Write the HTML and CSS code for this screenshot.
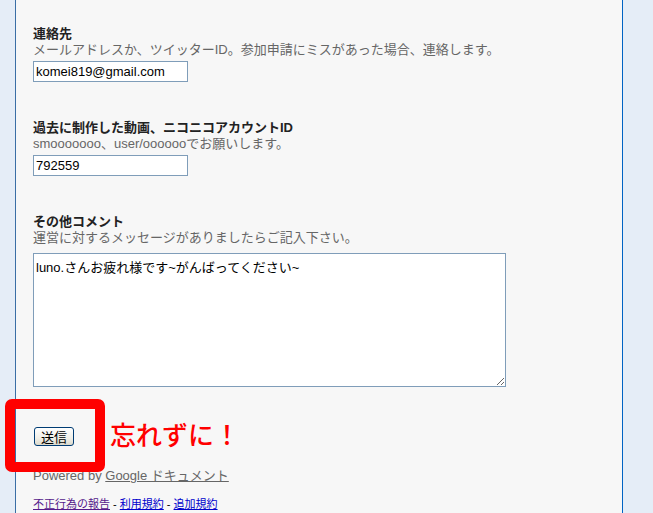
FILE: index.html
```html
<!DOCTYPE html>
<html>
<head>
  <meta charset="utf-8">
  <title>参加申請フォーム</title>
  <link rel="stylesheet" href="styles.css">
</head>
<body>
  <div class="page">
    <form class="form-panel">
      <div class="field">
        <label class="field-label" for="contact">連絡先</label>
        <div class="field-help">メールアドレスか、ツイッターID。参加申請にミスがあった場合、連絡します。</div>
        <input class="text-input" type="text" id="contact" value="komei819@gmail.com">
      </div>

      <div class="field">
        <label class="field-label" for="account">過去に制作した動画、ニコニコアカウントID</label>
        <div class="field-help">smooooooo、user/ooooooでお願いします。</div>
        <input class="text-input" type="text" id="account" value="792559">
      </div>

      <div class="field">
        <label class="field-label" for="comment">その他コメント</label>
        <div class="field-help">運営に対するメッセージがありましたらご記入下さい。</div>
        <textarea class="text-area" id="comment">luno.さんお疲れ様です~がんばってください~</textarea>
      </div>

      <div class="submit-row">
        <span class="highlight-box"></span>
        <button class="submit-button" type="button">送信</button>
        <span class="reminder">忘れずに！</span>
      </div>

      <div class="powered">Powered by <a href="#">Google ドキュメント</a></div>

      <div class="footer-links">
        <a class="visited" href="#">不正行為の報告</a> - <a href="#">利用規約</a> - <a href="#">追加規約</a>
      </div>
    </form>
  </div>
</body>
</html>
```

FILE: styles.css
```css
html, body {
  margin: 0;
  height: 100%;
}

body {
  background-color: #e5edf7;
  font-family: "Liberation Sans", "Noto Sans CJK JP", sans-serif;
  font-size: 13px;
  color: #000;
}

.page {
  height: 100%;
  padding-left: 15px;
}

.form-panel {
  box-sizing: border-box;
  width: 608px;
  height: 100%;
  margin: 0;
  padding: 26px 17px 0;
  background-color: #f7f7f7;
  border-left: 1px solid #3a6ea5;
  border-right: 1px solid #0063c4;
}

.field {
  margin-bottom: 38px;
}

.field-label {
  display: block;
  font-weight: bold;
  line-height: 16px;
  color: #222;
}

.field-help {
  line-height: 16px;
  color: #666;
}

.text-input {
  display: block;
  box-sizing: border-box;
  width: 155px;
  height: 21px;
  margin-top: 3px;
  padding: 0 2px;
  border: 1px solid #7f9db9;
  background: #fff;
  font-family: "Liberation Sans", "Noto Sans CJK JP", sans-serif;
  font-size: 13px;
  color: #000;
}

.text-area {
  display: block;
  box-sizing: border-box;
  width: 473px;
  height: 134px;
  margin-top: 7px;
  padding: 3px 2px;
  border: 1px solid #7f9db9;
  background: #fff;
  font-family: "Liberation Sans", "Noto Sans CJK JP", sans-serif;
  font-size: 13px;
  color: #000;
}

.submit-row {
  position: relative;
  display: flex;
  align-items: flex-start;
  gap: 36px;
  height: 30px;
  margin-top: -6px;
}

.submit-button {
  box-sizing: border-box;
  width: 40px;
  height: 19px;
  margin: 8px 0 0 1px;
  padding: 0;
  border: 1px solid #003c74;
  border-radius: 3px;
  background: linear-gradient(#ffffff, #f0efe8 60%, #dcd9cb);
  font-family: "Noto Sans CJK JP", sans-serif;
  font-size: 13px;
  line-height: 17px;
  color: #000;
}

.reminder {
  font-family: "Noto Sans CJK JP", sans-serif;
  font-size: 26px;
  font-weight: 500;
  line-height: 30px;
  color: #ff0000;
}

.highlight-box {
  position: absolute;
  left: -28px;
  top: -20px;
  width: 100px;
  height: 73px;
  box-sizing: border-box;
  border: 10px solid #ff0000;
  border-radius: 7px;
}

.powered {
  margin-top: 19px;
  line-height: 16px;
  color: #666;
}

.powered a {
  color: #666;
}

.footer-links {
  margin-top: 12px;
  font-size: 11px;
  line-height: 16px;
}

.footer-links a {
  color: #0000cc;
}

.footer-links a.visited {
  color: #551a8b;
}
```
